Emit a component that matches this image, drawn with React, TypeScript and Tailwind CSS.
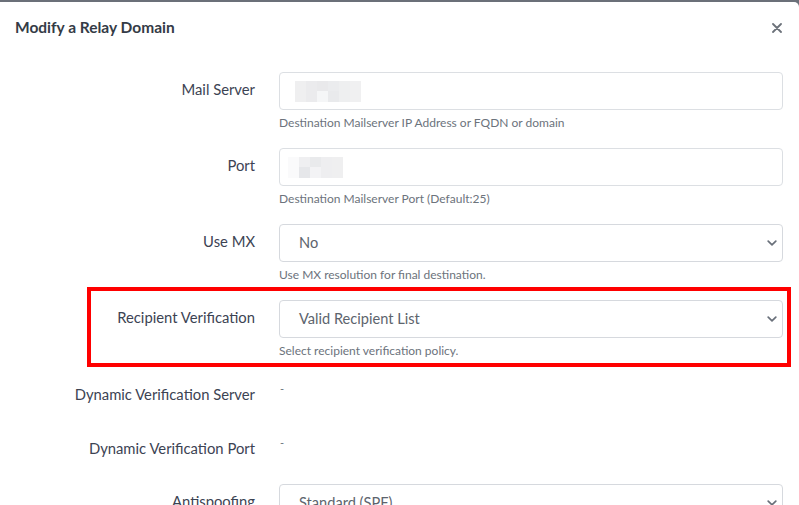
import { ReactNode } from "react";

const font = { fontFamily: "Lato, 'Open Sans', sans-serif" };

function Chevron() {
  return (
    <svg width="10" height="6" viewBox="0 0 10 6" className="shrink-0">
      <path d="M1.2 1.2l3.8 3.6 3.8-3.6" fill="none" stroke="#69707a" strokeWidth="1.7" strokeLinecap="round" strokeLinejoin="round" />
    </svg>
  );
}

// pixelated redaction over a hidden value
function Mosaic({ cells }: { cells: string[][] }) {
  return (
    <div className="flex flex-col">
      {cells.map((row, i) => (
        <div key={i} className="flex">
          {row.map((c, j) => (
            <div key={j} className="w-[11px] h-[10.5px]" style={{ backgroundColor: c }} />
          ))}
        </div>
      ))}
    </div>
  );
}

function Row({ label, help, children }: { label: string; help: string; children: ReactNode }) {
  return (
    <div className="flex h-[76px]">
      <div className="w-[255px] h-[38px] pb-[3px] flex items-center justify-end text-[14.8px] text-[#3c4353]">{label}</div>
      <div className="ml-[24px] w-[504px]">
        {children}
        <p className="mt-[5px] text-[12px] leading-4 text-[#6c737c]">{help}</p>
      </div>
    </div>
  );
}

function TextBox({ children }: { children?: ReactNode }) {
  return (
    <div className="h-[38px] rounded-[4px] border border-[#dcdfe3] bg-white flex items-center pl-[8px]">
      {children}
    </div>
  );
}

function Select({ value }: { value: string }) {
  return (
    <div className="h-[38px] rounded-[4px] border border-[#d6d9de] bg-white flex items-center justify-between pl-[19px] pr-[5px]">
      <span className="text-[14.6px] text-[#5d646d]">{value}</span>
      <Chevron />
    </div>
  );
}

function StaticRow({ label }: { label: string }) {
  return (
    <div className="flex h-[54px]">
      <div className="w-[255px] pt-[8px] text-right text-[14.8px] leading-5 text-[#3c4353]">{label}</div>
      <div className="ml-[25px] pt-[5px] text-[11px] leading-4 text-[#6c737c]">-</div>
    </div>
  );
}

export default function App() {
  return (
    <div className="relative h-[505px] w-[799px] overflow-hidden bg-[#6b7079]" style={font}>
      <div className="mt-[2px] h-[503px] bg-white rounded-tr-[5px]">
        <div className="flex items-center justify-between h-[52px] pl-[15px] pr-[17px]">
          <h2 className="text-[15.5px] font-bold text-[#343b46]">Modify a Relay Domain</h2>
          <svg width="10" height="10" viewBox="0 0 10 10">
            <path d="M1 1l8 8M9 1l-8 8" stroke="#6c727a" strokeWidth="1.8" strokeLinecap="round" />
          </svg>
        </div>

        <div className="pt-[18px]">
          <Row label="Mail Server" help="Destination Mailserver IP Address or FQDN or domain">
            <TextBox>
              <div className="ml-[7px]">
                <Mosaic
                  cells={[
                    ["#efeff0", "#ebebed", "#e9e9eb", "#ebecee", "#eeeff0", "#f0f0f1"],
                    ["#efeff0", "#ebebed", "#f5f6f7", "#e9eaec", "#eeeff0", "#f0f0f1"],
                  ]}
                />
              </div>
            </TextBox>
          </Row>
          <Row label="Port" help="Destination Mailserver Port (Default:25)">
            <TextBox>
              <Mosaic
                cells={[
                  ["#fafafb", "#efeff1", "#e9eaec", "#eeeef0", "#efeff0"],
                  ["#fafafb", "#e6e7ea", "#f3f3f5", "#eeeef0", "#efeff0"],
                ]}
              />
            </TextBox>
          </Row>
          <Row label="Use MX" help="Use MX resolution for final destination.">
            <Select value="No" />
          </Row>
          <Row label="Recipient Verification" help="Select recipient verification policy.">
            <Select value="Valid Recipient List" />
          </Row>
          <StaticRow label="Dynamic Verification Server" />
          <StaticRow label="Dynamic Verification Port" />
          <Row label="Antispoofing" help="">
            <Select value="Standard (SPF)" />
          </Row>
        </div>
      </div>

      {/* highlight frame */}
      <div className="absolute left-[87px] top-[287px] w-[704px] h-[80px] border-4 border-[#ff0000] pointer-events-none" />
    </div>
  );
}
